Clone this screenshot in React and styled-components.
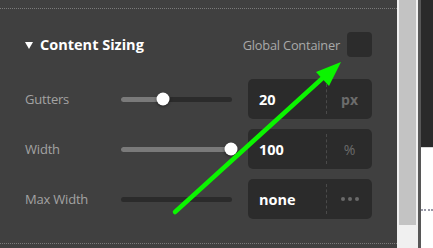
import React from "react";
import styled, { createGlobalStyle } from "styled-components";

const Global = createGlobalStyle`
  html, body { margin: 0; padding: 0; background: #ffffff; }
  body { font-family: "Open Sans", "Noto Sans", sans-serif; }
`;

const Page = styled.div`
  position: relative;
  display: flex;
  width: 433px;
  height: 248px;
  overflow: hidden;
`;

const Panel = styled.div`
  width: 397px;
  flex: none;
  background: #404040;
  padding-top: 8px;
  box-sizing: border-box;
`;

const Section = styled.div`
  border-top: 1px dotted #7a7a7a;
  border-bottom: 1px dotted #7a7a7a;
  padding: 23px 25px 24px 25px;
  display: flex;
  flex-direction: column;
  gap: 22px;
`;

const Header = styled.div`
  display: flex;
  align-items: center;
  height: 25px;
`;

const Caret = styled.span`
  width: 0;
  height: 0;
  border-left: 4px solid transparent;
  border-right: 4px solid transparent;
  border-top: 7px solid #ffffff;
  margin-right: 7px;
  margin-top: 1px;
`;

const Title = styled.span`
  color: #ffffff;
  font-weight: 700;
  font-size: 14.5px;
  letter-spacing: 0;
  flex: 1;
`;

const GlobalLabel = styled.span`
  color: #a9a9a9;
  font-size: 12.8px;
  letter-spacing: -0.2px;
  margin-right: 7px;
`;

const Check = styled.div`
  width: 25px;
  height: 25px;
  border-radius: 4px;
  background: #2c2c2c;
`;

const Rows = styled.div`
  display: flex;
  flex-direction: column;
  gap: 10px;
`;

const Row = styled.div`
  display: flex;
  align-items: center;
  height: 40px;
`;

const Label = styled.span`
  width: 96px;
  color: #a3a3a3;
  font-size: 13px;
  letter-spacing: -0.2px;
`;

const Track = styled.div`
  position: relative;
  width: 111px;
  height: 5px;
  border-radius: 3px;
  background: #2b2b2b;
  margin-right: 16px;
`;

const Fill = styled.div`
  height: 100%;
  border-radius: 3px;
  background: #7a7a7a;
`;

const Thumb = styled.div`
  position: absolute;
  top: 50%;
  width: 13px;
  height: 13px;
  border-radius: 50%;
  background: #ffffff;
  box-shadow: 0 1px 3px rgba(0, 0, 0, 0.5);
  transform: translate(-50%, -50%);
`;

const Box = styled.div`
  display: flex;
  align-items: center;
  width: 124px;
  height: 40px;
  border-radius: 5px;
  background: #2b2b2b;
  box-sizing: border-box;
`;

const Value = styled.span`
  width: 67px;
  padding-left: 11px;
  color: #ffffff;
  font-weight: 700;
  font-size: 14.5px;
`;

const Divider = styled.div`
  width: 0;
  height: 30px;
  border-left: 1px dashed #4a4a4a;
`;

const Unit = styled.span`
  flex: 1;
  text-align: center;
  color: #6c6c6c;
  font-weight: ${(p) => (p.$bold ? 700 : 400)};
  font-size: 14px;
`;

const Dots = styled.span`
  flex: 1;
  display: flex;
  justify-content: center;
  gap: 3px;
`;

const Dot = styled.i`
  width: 4px;
  height: 4px;
  border-radius: 50%;
  background: #6a6a6a;
`;

const ScrollTrack = styled.div`
  width: 21px;
  flex: none;
  background: #f0f0f0;
  display: flex;
  justify-content: center;
`;

const ScrollThumb = styled.div`
  width: 17px;
  height: 225px;
  background: #c3c3c3;
`;

const Edge = styled.div`
  width: 3px;
  flex: none;
  background: #575757;
`;

const Side = styled.div`
  flex: 1;
  display: flex;
  flex-direction: column;
  background: #ffffff;
`;

const SideDark = styled.div`
  height: 147px;
  background: #2a2a2a;
  border-bottom: 1px solid #d8d8d8;
`;

const SideDots = styled.div`
  margin-top: 61px;
  border-top: 2px dotted #9a9aa8;
`;

const Arrow = styled.svg`
  position: absolute;
  left: 0;
  top: 0;
  pointer-events: none;
`;

function Slider({ value, filled }) {
  return (
    <Track>
      {filled && <Fill style={{ width: `${value}%` }} />}
      {filled && <Thumb style={{ left: `${value}%` }} />}
    </Track>
  );
}

export default function App() {
  return (
    <>
      <Global />
      <Page>
        <Panel>
          <Section>
            <Header>
              <Caret />
              <Title>Content Sizing</Title>
              <GlobalLabel>Global Container</GlobalLabel>
              <Check />
            </Header>
            <Rows>
              <Row>
                <Label>Gutters</Label>
                <Slider value={38} filled />
                <Box>
                  <Value>20</Value>
                  <Divider />
                  <Unit $bold>px</Unit>
                </Box>
              </Row>
              <Row>
                <Label>Width</Label>
                <Slider value={99.5} filled />
                <Box>
                  <Value>100</Value>
                  <Divider />
                  <Unit>%</Unit>
                </Box>
              </Row>
              <Row>
                <Label>Max Width</Label>
                <Slider value={0} />
                <Box>
                  <Value>none</Value>
                  <Divider />
                  <Dots>
                    <Dot />
                    <Dot />
                    <Dot />
                  </Dots>
                </Box>
              </Row>
            </Rows>
          </Section>
        </Panel>
        <ScrollTrack>
          <ScrollThumb />
        </ScrollTrack>
        <Edge />
        <Side>
          <SideDark />
          <SideDots />
        </Side>
        <Arrow width="433" height="248" viewBox="0 0 433 248">
          <line x1="175" y1="212" x2="326" y2="75" stroke="#0bf500" strokeWidth="4.5" strokeLinecap="round" />
          <polygon points="341,62 316,72 329,86" fill="#0bf500" />
        </Arrow>
      </Page>
    </>
  );
}
